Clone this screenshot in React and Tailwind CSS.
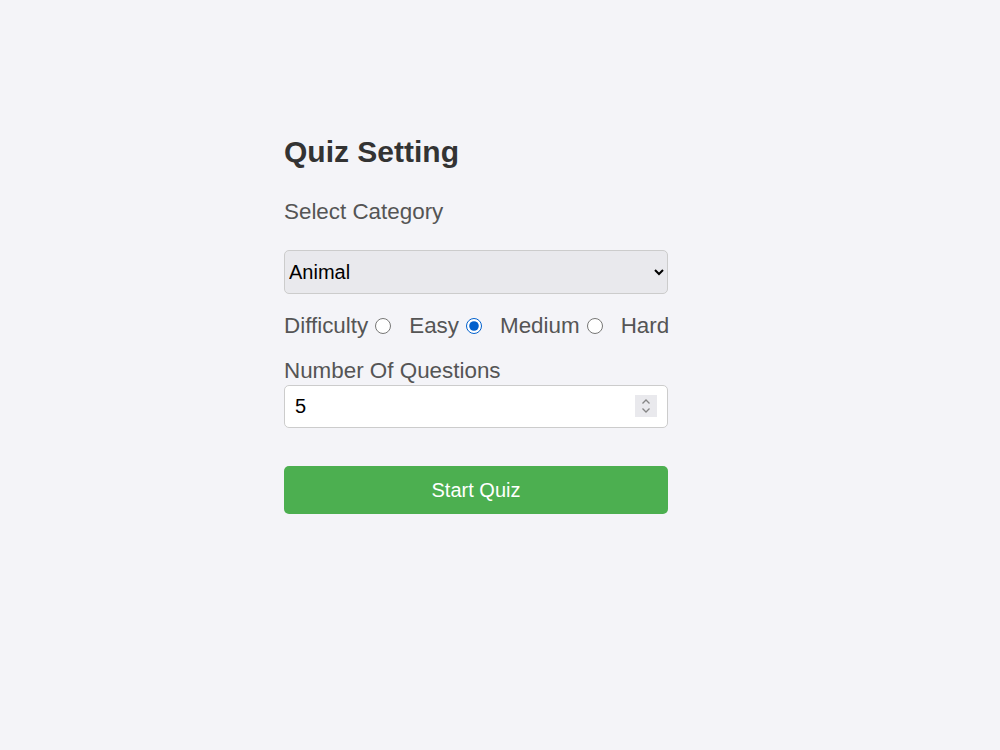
import React, { useState } from "react";

const App = () => {
  const [category, setCategory] = useState("animal");
  const [difficulty, setDifficulty] = useState("medium");
  const [amount, setAmount] = useState(5);

  return (
    <div className="min-h-[750px] w-full bg-[#f4f4f8] font-['Liberation_Sans',Arial,sans-serif]">
      <div className="mx-auto w-[432px] pt-[134px]">
        {/* Heading */}
        <h1 className="h-[36px] text-[30px] leading-[36px] font-bold text-[#333]">
          Quiz Setting
        </h1>

        {/* Category */}
        <label className="mt-[29px] block h-[26px] text-[22.4px] leading-[26px] text-[#555]">
          Select Category
        </label>
        <select
          value={category}
          onChange={(e) => setCategory(e.target.value)}
          className="mt-[25px] block h-[44px] w-[384px] rounded-[5px] border border-[#ccc] bg-[#e9e9ed] pl-0 pr-[6px] text-[20px] text-black"
        >
          <option value="animal">Animal</option>
          <option value="sports">Sports</option>
          <option value="history">History</option>
          <option value="science">Science</option>
        </select>

        {/* Difficulty */}
        <div className="mt-[19px] flex h-[26px] w-[384px] items-center text-[22.4px] leading-[26px] text-[#555]">
          <span>Difficulty</span>
          {[
            ["easy", "Easy"],
            ["medium", "Medium"],
            ["hard", "Hard"],
          ].map(([value, text]) => (
            <label key={value} className="flex items-center">
              <input
                type="radio"
                name="difficulty"
                value={value}
                checked={difficulty === value}
                onChange={() => setDifficulty(value)}
                className="ml-[7px] mr-[18px] h-4 w-4 accent-[#005fcc]"
              />
              <span>{text}</span>
            </label>
          ))}
        </div>

        {/* Number of questions */}
        <label className="mt-[19px] block h-[26px] text-[22.4px] leading-[26px] text-[#555]">
          Number Of Questions
        </label>
        <div className="relative mt-[1px] w-[384px]">
          <input
            type="number"
            value={amount}
            min={1}
            max={50}
            onChange={(e) => setAmount(e.target.value)}
            className="block h-[43px] w-full appearance-none rounded-[5px] border border-[#ccc] bg-white px-[10px] text-[20px] text-black [&::-webkit-inner-spin-button]:appearance-none [&::-webkit-outer-spin-button]:appearance-none"
          />
          {/* spinner */}
          <span className="pointer-events-none absolute right-[11px] top-[10px] flex h-[22px] w-[22px] flex-col items-center justify-center bg-[#e9e9ed]">
            <svg width="10" height="16" viewBox="0 0 10 16" fill="none" stroke="#858585" strokeWidth="1.3">
              <path d="M1.5 5.5 L5 2 L8.5 5.5" />
              <path d="M1.5 10.5 L5 14 L8.5 10.5" />
            </svg>
          </span>
        </div>

        <button className="mt-[38px] block h-[48px] w-[384px] rounded-[5px] bg-[#4caf50] text-[20px] text-white">
          Start Quiz
        </button>
      </div>
    </div>
  );
};

export default App;
